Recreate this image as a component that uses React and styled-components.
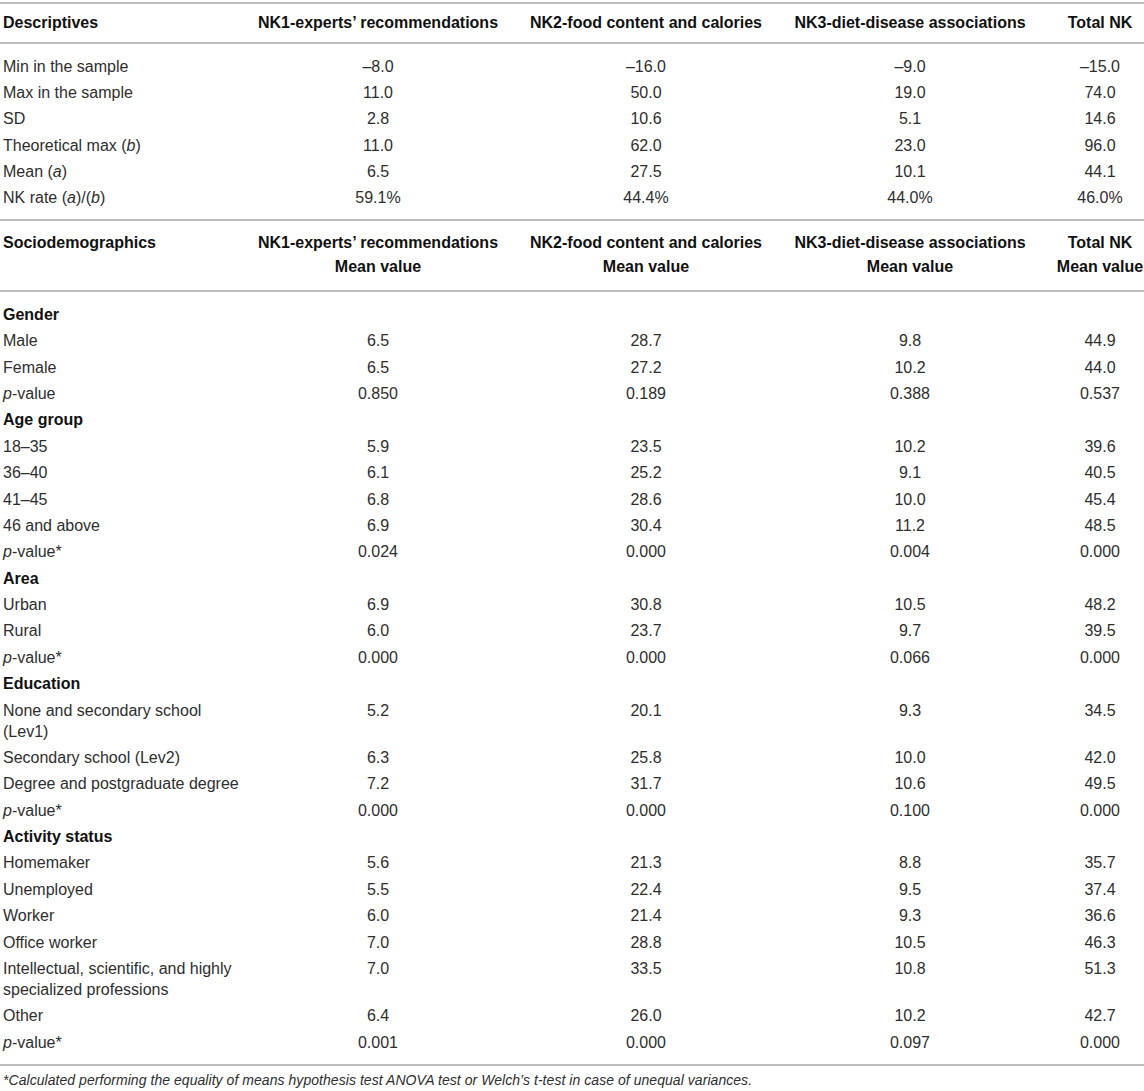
import React from 'react';
import styled, { createGlobalStyle } from 'styled-components';

const GlobalStyle = createGlobalStyle`
  html, body {
    margin: 0;
    padding: 0;
    background: #fff;
  }
  body {
    font-family: 'Liberation Sans', Arial, sans-serif;
    color: #2e2e2e;
  }
`;

const Page = styled.div`
  width: 1144px;
  padding-top: 2px;
`;

const Table = styled.table`
  width: 1144px;
  border-collapse: collapse;
  table-layout: fixed;
  font-size: 16px;
`;

const HeadRow = styled.tr`
  border-top: 2px solid #bdbdbd;
  border-bottom: 2px solid #bdbdbd;
`;

const HeadCell = styled.th`
  padding: ${props => (props.$tall ? '10px 0 11px' : '7px 0')};
  padding-left: ${props => (props.$first ? '3px' : '0')};
  line-height: 24px;
  font-weight: 700;
  color: #111;
  text-align: ${props => (props.$first ? 'left' : 'center')};
  white-space: nowrap;
  vertical-align: top;
`;

const Row = styled.tr``;

const Cell = styled.td`
  padding-left: ${props => (props.$first ? '3px' : '0')};
  padding-right: 0;
  padding-top: ${props => (props.$gapTop ? '11.5px' : '2.7px')};
  padding-bottom: ${props => (props.$gapBottom ? '11px' : '2.7px')};
  line-height: 21px;
  text-align: ${props => (props.$first ? 'left' : 'center')};
  white-space: nowrap;
  vertical-align: top;
  font-weight: ${props => (props.$group ? 700 : 400)};
  color: ${props => (props.$group ? '#111' : '#2e2e2e')};
`;

const FootRule = styled.div`
  border-top: 2px solid #bdbdbd;
`;

const Footnote = styled.p`
  margin: 0;
  padding: 4px 0 0 3px;
  font-size: 14px;
  line-height: 20px;
  font-style: italic;
  color: #2e2e2e;
  letter-spacing: 0.05px;
`;

const COLS = [
  'NK1-experts’ recommendations',
  'NK2-food content and calories',
  'NK3-diet-disease associations',
  'Total NK',
];

const DESCRIPTIVES = [
  ['Min in the sample', '–8.0', '–16.0', '–9.0', '–15.0'],
  ['Max in the sample', '11.0', '50.0', '19.0', '74.0'],
  ['SD', '2.8', '10.6', '5.1', '14.6'],
  [<>Theoretical max (<i>b</i>)</>, '11.0', '62.0', '23.0', '96.0'],
  [<>Mean (<i>a</i>)</>, '6.5', '27.5', '10.1', '44.1'],
  [<>NK rate (<i>a</i>)/(<i>b</i>)</>, '59.1%', '44.4%', '44.0%', '46.0%'],
];

const pv = star => <><i>p</i>-value{star ? '*' : ''}</>;

const SOCIO = [
  { group: 'Gender' },
  ['Male', '6.5', '28.7', '9.8', '44.9'],
  ['Female', '6.5', '27.2', '10.2', '44.0'],
  [pv(false), '0.850', '0.189', '0.388', '0.537'],
  { group: 'Age group' },
  ['18–35', '5.9', '23.5', '10.2', '39.6'],
  ['36–40', '6.1', '25.2', '9.1', '40.5'],
  ['41–45', '6.8', '28.6', '10.0', '45.4'],
  ['46 and above', '6.9', '30.4', '11.2', '48.5'],
  [pv(true), '0.024', '0.000', '0.004', '0.000'],
  { group: 'Area' },
  ['Urban', '6.9', '30.8', '10.5', '48.2'],
  ['Rural', '6.0', '23.7', '9.7', '39.5'],
  [pv(true), '0.000', '0.000', '0.066', '0.000'],
  { group: 'Education' },
  [<>None and secondary school<br />(Lev1)</>, '5.2', '20.1', '9.3', '34.5'],
  ['Secondary school (Lev2)', '6.3', '25.8', '10.0', '42.0'],
  ['Degree and postgraduate degree', '7.2', '31.7', '10.6', '49.5'],
  [pv(true), '0.000', '0.000', '0.100', '0.000'],
  { group: 'Activity status' },
  ['Homemaker', '5.6', '21.3', '8.8', '35.7'],
  ['Unemployed', '5.5', '22.4', '9.5', '37.4'],
  ['Worker', '6.0', '21.4', '9.3', '36.6'],
  ['Office worker', '7.0', '28.8', '10.5', '46.3'],
  [<>Intellectual, scientific, and highly<br />specialized professions</>, '7.0', '33.5', '10.8', '51.3'],
  ['Other', '6.4', '26.0', '10.2', '42.7'],
  [pv(true), '0.001', '0.000', '0.097', '0.000'],
];

function BodyRows({ rows }) {
  const last = rows.length - 1;
  return rows.map((row, i) => {
    const gapTop = i === 0;
    const gapBottom = i === last;
    if (!Array.isArray(row)) {
      return (
        <Row key={i}>
          <Cell $first $group $gapTop={gapTop} $gapBottom={gapBottom} colSpan={5}>
            {row.group}
          </Cell>
        </Row>
      );
    }
    return (
      <Row key={i}>
        {row.map((value, j) => (
          <Cell key={j} $first={j === 0} $gapTop={gapTop} $gapBottom={gapBottom}>
            {value}
          </Cell>
        ))}
      </Row>
    );
  });
}

export default function App() {
  return (
    <Page>
      <GlobalStyle />
      <Table>
        <colgroup>
          <col style={{ width: 228 }} />
          <col style={{ width: 300 }} />
          <col style={{ width: 236 }} />
          <col style={{ width: 292 }} />
          <col style={{ width: 88 }} />
        </colgroup>
        <thead>
          <HeadRow>
            <HeadCell $first>Descriptives</HeadCell>
            {COLS.map(c => <HeadCell key={c}>{c}</HeadCell>)}
          </HeadRow>
        </thead>
        <tbody>
          <BodyRows rows={DESCRIPTIVES} />
        </tbody>
        <tbody>
          <HeadRow>
            <HeadCell as="td" $first $tall>Sociodemographics</HeadCell>
            {COLS.map(c => (
              <HeadCell as="td" key={c} $tall>
                {c}
                <br />
                Mean value
              </HeadCell>
            ))}
          </HeadRow>
        </tbody>
        <tbody>
          <BodyRows rows={SOCIO} />
        </tbody>
      </Table>
      <FootRule />
      <Footnote>
        *Calculated performing the equality of means hypothesis test ANOVA test or Welch’s t-test in case of unequal variances.
      </Footnote>
    </Page>
  );
}
